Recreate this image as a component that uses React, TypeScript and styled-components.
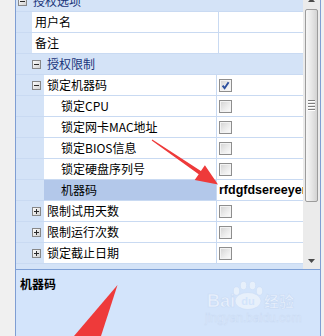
import React from 'react';
import styled, { createGlobalStyle } from 'styled-components';

const Global = createGlobalStyle`
  html, body { margin: 0; padding: 0; background: #f0f0f0; overflow: hidden; }
  body {
    width: 324px; height: 336px;
    font-family: "Noto Sans CJK SC", "Microsoft YaHei", sans-serif;
    font-size: 12px; color: #000;
  }
`;

const LINE = '#c9daf2';
const MARGIN = '#d4e3f7';

const Page = styled.div`
  position: relative;
  width: 324px;
  height: 336px;
  overflow: hidden;
  padding-left: 15px;
  box-sizing: border-box;
`;

const Frame = styled.div`
  width: 306px;
  height: 345px;
  margin-top: -9px;
  box-sizing: border-box;
  border-left: 1px solid #7f9ed3;
  border-right: 1px solid #7f9ed3;
  display: flex;
  flex-direction: column;
`;

const GridView = styled.div`
  height: 278px;
  flex: none;
  display: flex;
`;

const Rows = styled.div`
  flex: 1;
  min-width: 0;
  overflow: hidden;
  display: flex;
  flex-direction: column;
  background: ${MARGIN};
`;

const CategoryRow = styled.div<{ $pad: number }>`
  height: 21px;
  flex: none;
  box-sizing: border-box;
  border-bottom: 1px solid ${LINE};
  background: ${MARGIN};
  display: flex;
  align-items: center;
  gap: 6px;
  padding-left: ${p => p.$pad}px;
  color: #1a357a;
  line-height: 20px;
`;

const PropRow = styled.div`
  height: 21px;
  flex: none;
  box-sizing: border-box;
  border-bottom: 1px solid ${LINE};
  display: flex;
  min-width: 0;
`;

const Margin = styled.div<{ $w: number }>`
  width: ${p => p.$w}px;
  flex: none;
  background: ${MARGIN};
  display: flex;
  align-items: center;
  padding-left: 16px;
  box-sizing: border-box;
`;

const NameCell = styled.div<{ $w: number; $pad: number; $sel?: boolean }>`
  width: ${p => p.$w}px;
  flex: none;
  box-sizing: border-box;
  border-right: 1px solid ${LINE};
  background: ${p => (p.$sel ? '#b3c8ea' : '#ffffff')};
  padding-left: ${p => p.$pad}px;
  line-height: 20px;
  white-space: nowrap;
  overflow: hidden;
`;

const ValueCell = styled.div`
  flex: 1;
  min-width: 0;
  background: #ffffff;
  display: flex;
  align-items: center;
  padding-left: 2px;
  overflow: hidden;
  white-space: nowrap;
`;

const ValueText = styled.span`
  font-family: "Liberation Sans", Arial, sans-serif;
  font-weight: bold;
  font-size: 12.5px;
  line-height: 20px;
`;

const Band = styled.div`
  flex: 1;
  background: ${MARGIN};
`;

const Check = styled.span`
  width: 13px;
  height: 13px;
  box-sizing: border-box;
  border: 1px solid #8e8e8e;
  background: linear-gradient(135deg, #d2d2d2 0%, #ececec 55%, #fdfdfd 100%);
  box-shadow: inset 0 0 0 1px #f3f3f3;
  display: flex;
  align-items: center;
  justify-content: center;
`;

const ScrollBar = styled.div`
  width: 17px;
  flex: none;
  background: #ebebeb;
  display: flex;
  flex-direction: column;
`;

const ScrollButton = styled.div`
  height: 17px;
  flex: none;
  display: flex;
  align-items: center;
  justify-content: center;
`;

const Track = styled.div`
  flex: 1;
  padding: 1px 2px 0 2px;
`;

const Thumb = styled.div`
  height: 193px;
  box-sizing: border-box;
  border: 1px solid #9c9c9c;
  border-radius: 2px;
  background: linear-gradient(90deg, #f7f7f7 0%, #e9e9e9 45%, #d3d3d3 100%);
  display: flex;
  flex-direction: column;
  align-items: center;
  justify-content: center;
  gap: 1px;
`;

const Grip = styled.span`
  width: 7px;
  height: 1px;
  background: #7d7d7d;
  box-shadow: 0 1px 0 #ffffff;
  margin-bottom: 1px;
`;

const Panel = styled.div`
  flex: 1;
  border-top: 1px solid #7ea0d6;
  background: #d3e4fb;
  padding: 6px 4px;
`;

const PanelTitle = styled.div`
  font-weight: bold;
  line-height: 16px;
`;

const Overlay = styled.svg`
  position: absolute;
  left: 0;
  top: 0;
  pointer-events: none;
`;

const Expander = ({ plus }: { plus?: boolean }) => (
  <svg width="9" height="9" viewBox="0 0 9 9" style={{ flex: 'none', display: 'block' }}>
    <defs>
      <linearGradient id={plus ? 'gp' : 'gm'} x1="0" y1="0" x2="1" y2="1">
        <stop offset="0" stopColor="#ffffff" />
        <stop offset="1" stopColor="#cfcfcf" />
      </linearGradient>
    </defs>
    <rect x="0.5" y="0.5" width="8" height="8" fill={`url(#${plus ? 'gp' : 'gm'})`} stroke="#878787" />
    <rect x="2" y="4" width="5" height="1" fill="#2a2a2a" />
    {plus && <rect x="4" y="2" width="1" height="5" fill="#2a2a2a" />}
  </svg>
);

const CheckBox = ({ checked }: { checked?: boolean }) => (
  <Check>
    {checked && (
      <svg width="9" height="9" viewBox="0 0 9 9">
        <path d="M1.6 4.6 L3.6 7.2 L7.6 1.2" fill="none" stroke="#2c4f9e" strokeWidth="1.9" />
      </svg>
    )}
  </Check>
);

type Row =
  | { kind: 'cat'; label: string; pad: number }
  | {
      kind: 'prop';
      label: string;
      margin: number;
      pad: number;
      exp?: 'minus' | 'plus';
      check?: boolean;
      value?: string;
      sel?: boolean;
    };

const rows: Row[] = [
  { kind: 'cat', label: '授权选项', pad: 2 },
  { kind: 'prop', label: '用户名', margin: 14, pad: 3 },
  { kind: 'prop', label: '备注', margin: 14, pad: 3 },
  { kind: 'cat', label: '授权限制', pad: 16 },
  { kind: 'prop', label: '锁定机器码', margin: 28, pad: 3, exp: 'minus', check: true },
  { kind: 'prop', label: '锁定CPU', margin: 28, pad: 17, check: false },
  { kind: 'prop', label: '锁定网卡MAC地址', margin: 28, pad: 17, check: false },
  { kind: 'prop', label: '锁定BIOS信息', margin: 28, pad: 17, check: false },
  { kind: 'prop', label: '锁定硬盘序列号', margin: 28, pad: 17, check: false },
  { kind: 'prop', label: '机器码', margin: 28, pad: 17, sel: true, value: 'rfdgfdsereeyer' },
  { kind: 'prop', label: '限制试用天数', margin: 28, pad: 3, exp: 'plus', check: false },
  { kind: 'prop', label: '限制运行次数', margin: 28, pad: 3, exp: 'plus', check: false },
  { kind: 'prop', label: '锁定截止日期', margin: 28, pad: 3, exp: 'plus', check: false },
];

export default function App() {
  return (
    <>
      <Global />
      <Page>
        <Frame>
          <GridView>
            <Rows>
              {rows.map((r, i) =>
                r.kind === 'cat' ? (
                  <CategoryRow key={i} $pad={r.pad}>
                    <Expander />
                    <span>{r.label}</span>
                  </CategoryRow>
                ) : (
                  <PropRow key={i}>
                    <Margin $w={r.margin}>{r.exp && <Expander plus={r.exp === 'plus'} />}</Margin>
                    <NameCell $w={201 - r.margin} $pad={r.pad} $sel={r.sel}>
                      {r.label}
                    </NameCell>
                    <ValueCell>
                      {r.check !== undefined && <CheckBox checked={r.check} />}
                      {r.value && <ValueText>{r.value}</ValueText>}
                    </ValueCell>
                  </PropRow>
                )
              )}
              <Band />
            </Rows>
            <ScrollBar>
              <ScrollButton>
                <svg width="7" height="4" viewBox="0 0 7 4">
                  <path d="M0 4 L3.5 0 L7 4 Z" fill="#4a4a4a" />
                </svg>
              </ScrollButton>
              <Track>
                <Thumb>
                  <Grip />
                  <Grip />
                  <Grip />
                  <Grip />
                </Thumb>
              </Track>
              <ScrollButton>
                <svg width="7" height="4" viewBox="0 0 7 4">
                  <path d="M0 0 L7 0 L3.5 4 Z" fill="#4a4a4a" />
                </svg>
              </ScrollButton>
            </ScrollBar>
          </GridView>
          <Panel>
            <PanelTitle>机器码</PanelTitle>
          </Panel>
        </Frame>
        <Overlay width="324" height="336" viewBox="0 0 324 336">
          <g fill="#e9f1fc" stroke="#c9dbf5" strokeWidth="0.6" opacity="0.95">
            <text x="207" y="307" fontFamily="Liberation Sans, Arial, sans-serif" fontWeight="bold" fontSize="18">
              Bai
            </text>
            <ellipse cx="236.5" cy="291" rx="3.2" ry="4.2" />
            <ellipse cx="243.5" cy="285.5" rx="3.2" ry="4.2" />
            <ellipse cx="252.5" cy="285.5" rx="3.2" ry="4.2" />
            <ellipse cx="259.5" cy="291" rx="3.2" ry="4.2" />
            <ellipse cx="248" cy="301" rx="13" ry="8.5" />
            <text x="264" y="307" fontFamily="Noto Sans CJK SC, sans-serif" fontWeight="bold" fontSize="15">
              经验
            </text>
            <text x="205" y="322" fontFamily="Liberation Sans, Arial, sans-serif" fontSize="12">
              jingyan.baidu.com
            </text>
          </g>
          <text
            x="248"
            y="305"
            textAnchor="middle"
            fill="#d3e4fb"
            fontFamily="Liberation Sans, Arial, sans-serif"
            fontWeight="bold"
            fontSize="11"
          >
            du
          </text>
          <polygon
            points="152.3,139.6 200.9,170.9 204.9,165.2 218,184.5 194.7,180 198.7,174.3 151.7,140.4"
            fill="#ee3a3a"
          />
          <polygon points="117.5,285 101,336 74,336" fill="#ee3a3a" />
        </Overlay>
      </Page>
    </>
  );
}
